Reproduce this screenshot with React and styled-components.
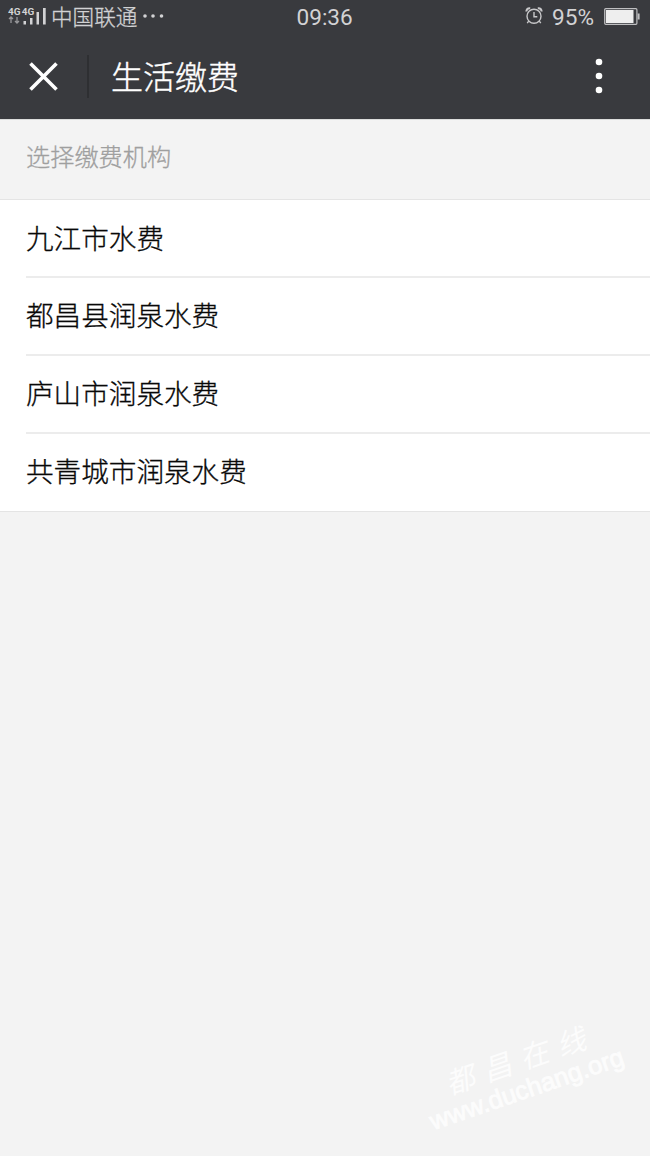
import React from "react";
import styled, { createGlobalStyle } from "styled-components";

const GlobalStyle = createGlobalStyle`
    * {
        box-sizing: border-box;
    }

    body {
        margin: 0;
        background: #f3f3f3;
        font-family: "Noto Sans CJK SC", sans-serif;
    }
`

const Page = styled.div`
    position: relative;
    min-height: 1156px;
    overflow: hidden;
    background: #f3f3f3;
`

const StatusBar = styled.div`
    display: grid;
    grid-template-columns: 1fr 56px 1fr;
    align-items: center;
    height: 34px;
    padding: 0 9px 2px 8px;
    background: #393a3e;
    color: #d2d2d4;
`

const StatusGroup = styled.div`
    display: flex;
    align-items: center;
    justify-content: ${(props) => (props.$end ? "flex-end" : "flex-start")};
`

const Carrier = styled.span`
    margin-left: 4px;
    font-size: 21.6px;
    font-weight: 300;
    line-height: 30px;
    white-space: nowrap;
    -webkit-text-stroke: 0.3px currentColor;
`

const StatusNumber = styled.span`
    display: block;
    margin-left: ${(props) => props.$gap || 0}px;
    padding-top: 3px;
    font-family: Roboto, sans-serif;
    font-size: 22.6px;
    font-weight: 400;
    line-height: 27px;
    white-space: nowrap;
`

const StatusIcon = styled.svg`
    display: block;
    flex: none;
    margin-left: ${(props) => props.$gap || 0}px;
`

const TitleBar = styled.header`
    display: flex;
    align-items: center;
    height: 85px;
    padding: 0 47px 1px 28px;
    background: #393a3e;
    color: #ffffff;
`

const IconButton = styled.button`
    display: block;
    padding: 0;
    border: 0;
    background: none;
    color: inherit;

    svg {
        display: block;
    }
`

const TitleDivider = styled.div`
    width: 2px;
    height: 43px;
    margin: 0 22px 0 28px;
    background: #2e2f32;
`

const Title = styled.h1`
    flex: 1;
    margin: 0;
    padding-bottom: 2px;
    font-size: 32px;
    font-weight: 300;
    line-height: 44px;
    -webkit-text-stroke: 0.4px currentColor;
`

const SectionLabel = styled.div`
    height: 80px;
    padding: 17px 26px 0;
    border-top: 1px solid #dcdcdc;
    color: #9f9f9f;
    font-size: 24.2px;
    font-weight: 300;
    line-height: 38px;
    -webkit-text-stroke: 0.3px currentColor;
`

const List = styled.ul`
    margin: 0;
    padding: 0 0 0 26px;
    border-top: 1px solid #e4e4e4;
    border-bottom: 1px solid #e4e4e4;
    background: #ffffff;
    list-style: none;
`

const ListItem = styled.li`
    height: 78px;
    color: #080808;
    font-size: 27.6px;
    font-weight: 300;
    line-height: 73px;
    -webkit-text-stroke: 0.3px currentColor;

    &:first-child {
        height: 76px;
        line-height: 75px;
    }

    &:last-child {
        height: 79px;
        line-height: 72px;
    }

    & + & {
        border-top: 2px solid #ececec;
    }
`

const Watermark = styled.div`
    position: absolute;
    left: 435px;
    top: 1107px;
    color: #fcfcfc;
    transform: rotate(-19deg);
    transform-origin: 0 100%;
    white-space: nowrap;
`

const WatermarkName = styled.div`
    position: absolute;
    left: 27px;
    bottom: 29px;
    font-size: 29px;
    font-style: italic;
    font-weight: 400;
    letter-spacing: 10px;
    line-height: 34px;
`

const WatermarkUrl = styled.div`
    font-family: "Liberation Sans", sans-serif;
    font-size: 25.6px;
    line-height: 28px;
    -webkit-text-stroke: 0.9px currentColor;
`

const companies = [
    "九江市水费",
    "都昌县润泉水费",
    "庐山市润泉水费",
    "共青城市润泉水费",
];

const SignalIcon = () => (
    <StatusIcon width="39" height="18" viewBox="0 0 39 18" fill="#d2d2d4">
        <g fontFamily="Roboto, sans-serif" fontSize="9.5" fontWeight="700">
            <text x="0" y="7.5" textLength="12.5" lengthAdjust="spacingAndGlyphs">4G</text>
            <text x="13.8" y="7.5" textLength="12.5" lengthAdjust="spacingAndGlyphs">4G</text>
        </g>
        <path d="M3 16v-6M1 12l2-2 2 2M9 10v6M7 14l2 2 2-2" fill="none" stroke="#98989b" strokeWidth="1.3" />
        <rect x="15.5" y="14" width="2.5" height="3.5" />
        <rect x="22" y="11" width="2.5" height="6.5" />
        <rect x="28.5" y="5" width="2.5" height="12.5" />
        <rect x="35" y="1" width="2.7" height="16.5" />
    </StatusIcon>
);

const MoreDots = () => (
    <StatusIcon $gap={6} width="22" height="6" viewBox="0 0 22 6" fill="#d2d2d4">
        <circle cx="2" cy="3" r="1.8" />
        <circle cx="10" cy="3" r="1.8" />
        <circle cx="18.5" cy="3" r="1.8" />
    </StatusIcon>
);

const AlarmIcon = () => (
    <StatusIcon width="18" height="18" viewBox="0 0 18 18" fill="none" stroke="#c8c8ca" strokeWidth="1.4">
        <circle cx="9" cy="9.2" r="7" />
        <path d="M9 5v4.7h3.3M3.7 14.2l-1.5 2M14.3 14.2l1.5 2" />
        <path d="M1.3 4.5C1.5 2.4 3 1 5.2 1.2M12.8 1.2c2.2-.2 3.7 1.2 3.9 3.3" strokeWidth="2" />
    </StatusIcon>
);

const BatteryIcon = () => (
    <StatusIcon $gap={10} width="37" height="17" viewBox="0 0 37 17">
        <rect x="0.7" y="0.7" width="32.2" height="15.6" rx="1" fill="none" stroke="#bfbfc1" strokeWidth="1.2" />
        <rect x="1.9" y="2" width="27.6" height="13" fill="#eeeeee" />
        <rect x="33.6" y="5.5" width="2" height="6" fill="#bfbfc1" />
    </StatusIcon>
);

const App = () => {
    return (
        <Page>
            <GlobalStyle />
            <StatusBar>
                <StatusGroup>
                    <SignalIcon />
                    <Carrier>中国联通</Carrier>
                    <MoreDots />
                </StatusGroup>
                <StatusNumber>09:36</StatusNumber>
                <StatusGroup $end>
                    <AlarmIcon />
                    <StatusNumber $gap={9}>95%</StatusNumber>
                    <BatteryIcon />
                </StatusGroup>
            </StatusBar>
            <TitleBar>
                <IconButton aria-label="关闭">
                    <svg width="31" height="31" viewBox="0 0 31 31" fill="none" stroke="currentColor" strokeWidth="3.6">
                        <path d="M2.5 2.5l26 26M28.5 2.5l-26 26" />
                    </svg>
                </IconButton>
                <TitleDivider />
                <Title>生活缴费</Title>
                <IconButton aria-label="更多">
                    <svg width="8" height="36" viewBox="0 0 8 36" fill="currentColor">
                        <circle cx="4" cy="4" r="3.3" />
                        <circle cx="4" cy="18" r="3.3" />
                        <circle cx="4" cy="32" r="3.3" />
                    </svg>
                </IconButton>
            </TitleBar>
            <SectionLabel>选择缴费机构</SectionLabel>
            <List>
                {companies.map((name) => (
                    <ListItem key={name}>{name}</ListItem>
                ))}
            </List>
            <Watermark>
                <WatermarkName>都昌在线</WatermarkName>
                <WatermarkUrl>www.duchang.org</WatermarkUrl>
            </Watermark>
        </Page>
    );
}

export default App;
